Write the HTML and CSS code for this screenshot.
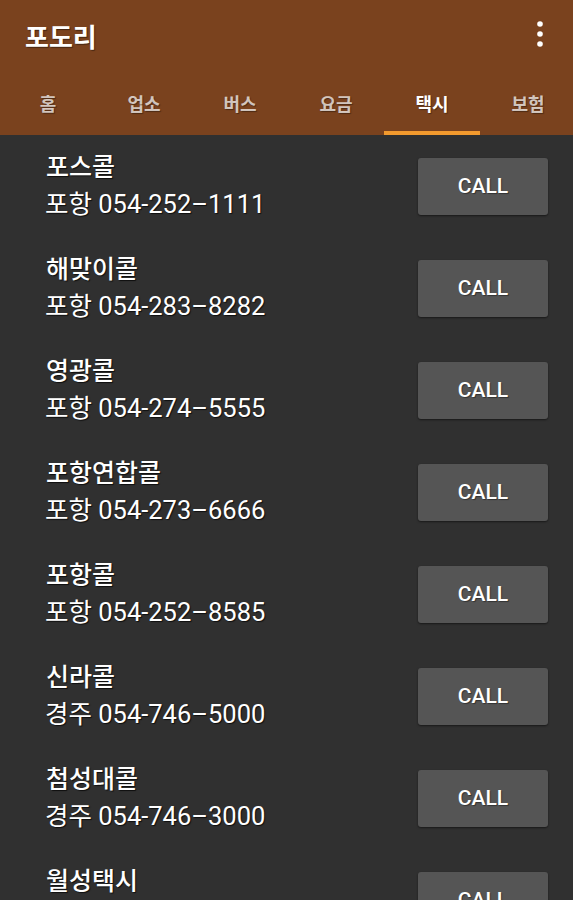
FILE: index.html
```html
<!DOCTYPE html>
<html lang="ko">
<head>
  <meta charset="utf-8">
  <meta name="viewport" content="width=device-width,initial-scale=1.0">
  <title>포도리</title>
  <link rel="stylesheet" href="styles.css">
</head>
<body>
  <div class="appbar">
    <div class="toolbar">
      <h1 class="title">포도리</h1>
      <svg class="more" width="10" height="30" viewBox="0 0 10 30">
        <circle cx="5" cy="5" r="2.8" fill="#fff"/>
        <circle cx="5" cy="15" r="2.8" fill="#fff"/>
        <circle cx="5" cy="25" r="2.8" fill="#fff"/>
      </svg>
    </div>
    <div class="tabs">
      <div class="tab">홈</div>
      <div class="tab">업소</div>
      <div class="tab">버스</div>
      <div class="tab">요금</div>
      <div class="tab active">택시</div>
      <div class="tab">보험</div>
    </div>
  </div>

  <div class="list">
    <div class="row">
      <div class="info"><div class="name">포스콜</div><div class="phone">포항 054-252–1111</div></div>
      <button class="call">CALL</button>
    </div>
    <div class="row">
      <div class="info"><div class="name">해맞이콜</div><div class="phone">포항 054-283–8282</div></div>
      <button class="call">CALL</button>
    </div>
    <div class="row">
      <div class="info"><div class="name">영광콜</div><div class="phone">포항 054-274–5555</div></div>
      <button class="call">CALL</button>
    </div>
    <div class="row">
      <div class="info"><div class="name">포항연합콜</div><div class="phone">포항 054-273–6666</div></div>
      <button class="call">CALL</button>
    </div>
    <div class="row">
      <div class="info"><div class="name">포항콜</div><div class="phone">포항 054-252–8585</div></div>
      <button class="call">CALL</button>
    </div>
    <div class="row">
      <div class="info"><div class="name">신라콜</div><div class="phone">경주 054-746–5000</div></div>
      <button class="call">CALL</button>
    </div>
    <div class="row">
      <div class="info"><div class="name">첨성대콜</div><div class="phone">경주 054-746–3000</div></div>
      <button class="call">CALL</button>
    </div>
    <div class="row">
      <div class="info"><div class="name">월성택시</div><div class="phone">경주 054-743–2000</div></div>
      <button class="call">CALL</button>
    </div>
  </div>
</body>
</html>
```
FILE: styles.css
```css
body {
  margin: 0;
  height: 900px;
  overflow: hidden;
  background: #303030;
  font-family: Roboto, "Noto Sans CJK KR", sans-serif;
  color: #fff;
}

.appbar {
  background: #7a421e;
  height: 135px;
  display: flex;
  flex-direction: column;
}

.toolbar {
  height: 70px;
  display: flex;
  align-items: center;
  justify-content: space-between;
  padding: 0 28px 0 25px;
}

.title {
  margin: 0;
  font-size: 26px;
  font-weight: 700;
  text-shadow: 1px 1px 1px rgba(0,0,0,.45);
}

.more {
  display: block;
  margin-top: -2px;
}

.tabs {
  flex: 1;
  display: flex;
}

.tab {
  width: 96px;
  flex: none;
  display: flex;
  align-items: center;
  justify-content: center;
  font-size: 18px;
  font-weight: 700;
  color: rgba(255,255,255,.72);
  text-shadow: 1px 1px 1px rgba(0,0,0,.35);
  box-sizing: border-box;
}

.tab.active {
  color: #fff;
  border-bottom: 4px solid #f29a2e;
  padding-top: 4px;
}

.list {
  display: flex;
  flex-direction: column;
}

.row {
  height: 102px;
  display: flex;
  align-items: center;
  justify-content: space-between;
  padding: 0 25px 0 46px;
}

.info {
  display: flex;
  flex-direction: column;
  font-size: 25px;
  line-height: 36px;
  text-shadow: 1px 1px 1px rgba(0,0,0,.7);
}

.name {
  font-weight: 500;
}

.phone {
  font-size: 25.5px;
  margin-left: -1px;
}

.call {
  width: 130px;
  height: 57px;
  border: none;
  border-radius: 3px;
  background: #555555;
  color: #fff;
  font-family: Roboto, sans-serif;
  font-size: 21px;
  font-weight: 500;
  box-shadow: 0 1px 2px rgba(0,0,0,.5);
  text-shadow: 1px 1px 1px rgba(0,0,0,.4);
}
```
